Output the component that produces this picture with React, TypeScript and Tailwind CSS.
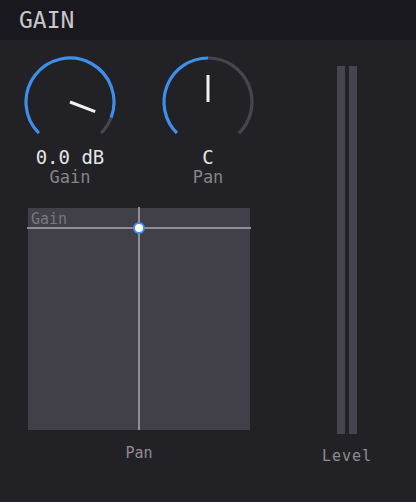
import React from 'react';

const BLUE = '#3f8fea';
const TRACK = '#47464f';

const pt = (cx: number, cy: number, r: number, a: number) => {
  const rad = (a * Math.PI) / 180;
  return [cx + r * Math.sin(rad), cy - r * Math.cos(rad)];
};

const arc = (cx: number, cy: number, r: number, a0: number, a1: number) => {
  const [x0, y0] = pt(cx, cy, r, a0);
  const [x1, y1] = pt(cx, cy, r, a1);
  const large = a1 - a0 > 180 ? 1 : 0;
  return `M ${x0} ${y0} A ${r} ${r} 0 ${large} 1 ${x1} ${y1}`;
};

const Knob = ({ angle, value, label }: { angle: number; value: string; label: string }) => {
  const cx = 48;
  const cy = 46;
  const [px, py] = pt(cx, cy, 27, angle);
  return (
    <div className="flex w-[96px] flex-col items-center">
      <svg width="96" height="84" viewBox="0 0 96 84">
        <path d={arc(cx, cy, 44, -135, angle)} stroke={BLUE} strokeWidth="3.2" fill="none" />
        <path d={arc(cx, cy, 44, angle, 135)} stroke={TRACK} strokeWidth="3.2" fill="none" />
        <line x1={cx} y1={cy} x2={px} y2={py} stroke="#f2f2f2" strokeWidth="3" />
      </svg>
      <div className="mt-[7px] text-[19px] leading-[20px] text-[#e4e4e8]">{value}</div>
      <div className="text-[17px] leading-[20px] text-[#86858c]">{label}</div>
    </div>
  );
};

const XYPad = () => (
  <div className="flex flex-col items-center">
    <div className="relative h-[222px] w-[222px] bg-[#414049]">
      <span className="absolute left-[3px] top-[2px] text-[15px] leading-[18px] text-[#77767e]">Gain</span>
      <div className="absolute left-[-1px] right-[-1px] top-[19px] h-[2px] bg-[#8f8e96]" />
      <div className="absolute bottom-0 left-[110px] top-[-1px] w-[2px] bg-[#8f8e96]" />
      <div className="absolute left-[105px] top-[14px] h-[12px] w-[12px] rounded-full border-2 border-[#3f8fea] bg-white" />
    </div>
    <div className="mt-[14px] text-[15px] leading-[18px] text-[#8e8d94]">Pan</div>
  </div>
);

const Meter = () => (
  <div className="flex flex-col items-center">
    <div className="flex h-[368px] gap-[4px]">
      <div className="w-[8px] bg-[#46454f]" />
      <div className="w-[8px] bg-[#46454f]" />
    </div>
    <div className="mt-[13px] whitespace-nowrap text-[15px] leading-[18px] tracking-[1px] text-[#8e8d94]">
      Level
    </div>
  </div>
);

export default function App() {
  return (
    <div
      className="h-[502px] w-[416px] overflow-hidden bg-[#222126]"
      style={{ fontFamily: '"DejaVu Sans Mono", "Liberation Mono", monospace' }}
    >
      <div className="flex h-[40px] items-center bg-[#19181e] pl-[19px]">
        <span className="text-[23px] leading-[28px] text-[#c7c7cc]">GAIN</span>
      </div>
      <div className="flex">
        <div className="ml-[22px] flex flex-col">
          <div className="mt-[16px] flex gap-[42px]">
            <Knob angle={111} value="0.0 dB" label="Gain" />
            <Knob angle={0} value="C" label="Pan" />
          </div>
          <div className="ml-[6px] mt-[21px] self-start">
            <XYPad />
          </div>
        </div>
        <div className="ml-[66px] mt-[26px]">
          <Meter />
        </div>
      </div>
    </div>
  );
}
